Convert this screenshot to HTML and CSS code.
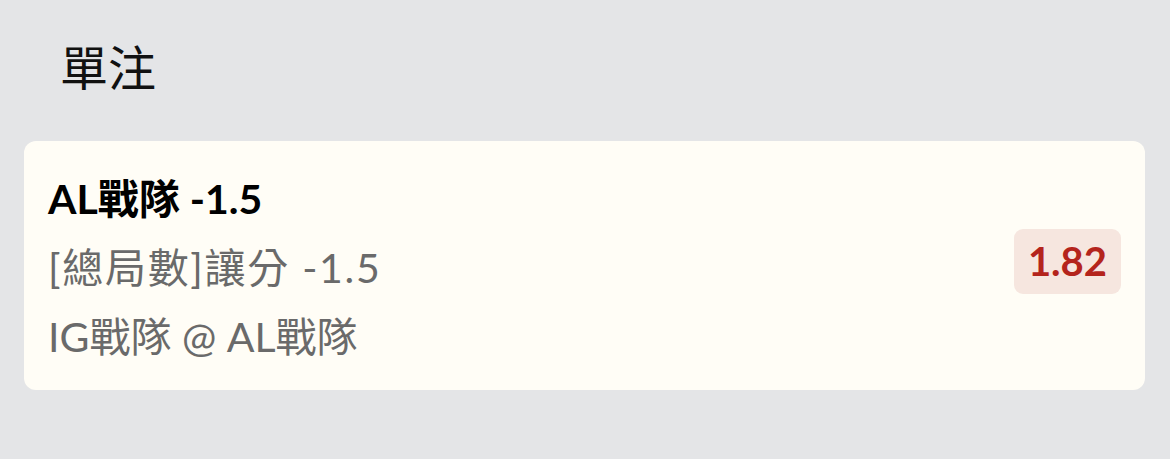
FILE: index.html
```html
<!DOCTYPE html>
<html lang="zh-Hant">
<head>
<meta charset="utf-8">
<link rel="stylesheet" href="styles.css">
</head>
<body>
<div class="page">
  <h1 class="title">單注</h1>
  <div class="card">
    <div class="info">
      <div class="pick">AL戰隊 -1.5</div>
      <div class="market">[總局數]讓分 -1.5</div>
      <div class="match">IG戰隊 @ AL戰隊</div>
    </div>
    <div class="odds">1.82</div>
  </div>
</div>
</body>
</html>
```

FILE: styles.css
```css
html, body {
  margin: 0;
  padding: 0;
  background: #e4e5e7;
}
body {
  font-family: Lato, "Noto Sans CJK TC", sans-serif;
  width: 1170px;
  height: 459px;
  overflow: hidden;
}
.page {
  padding: 0 24px;
}
.title {
  margin: 0;
  padding: 36px 0 0 36px;
  height: 141px;
  box-sizing: border-box;
  font-size: 48px;
  font-weight: 400;
  line-height: 64px;
  color: #111;
}
.card {
  width: 1121px;
  height: 249px;
  box-sizing: border-box;
  background: #fffdf6;
  border-radius: 12px;
  padding: 0 24px;
  display: flex;
  align-items: center;
  justify-content: space-between;
}
.info {
  display: flex;
  flex-direction: column;
  padding-top: 3px;
}
.info div {
  font-size: 41px;
  line-height: 69px;
}
.pick {
  font-weight: 700;
  color: #000;
}
.market, .match {
  color: #6a6a6a;
}
.market {
  letter-spacing: 1.7px;
}
.odds {
  background: #f6e6df;
  color: #b4241c;
  font-weight: 700;
  font-size: 40px;
  border-radius: 9px;
  padding: 0 14px;
  height: 65px;
  line-height: 65px;
  margin-bottom: 8px;
}
```
